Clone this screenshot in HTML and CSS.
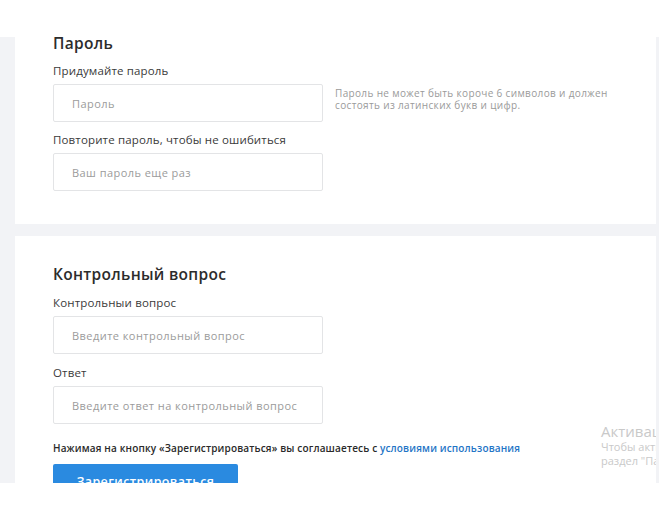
FILE: index.html
```html
<!DOCTYPE html>
<html lang="ru">
<head>
<meta charset="utf-8">
<title>Регистрация</title>
<link rel="stylesheet" href="styles.css">
</head>
<body>
<div class="page">
  <section class="card card-first">
    <h2 class="card-title">Пароль</h2>
    <label class="field-label">Придумайте пароль</label>
    <div class="field-row">
      <div class="input"><span class="placeholder">Пароль</span></div>
      <p class="hint">Пароль не может быть короче 6 символов и должен<br>состоять из латинских букв и цифр.</p>
    </div>
    <label class="field-label">Повторите пароль, чтобы не ошибиться</label>
    <div class="field-row">
      <div class="input"><span class="placeholder">Ваш пароль еще раз</span></div>
    </div>
  </section>
  <section class="card card-second">
    <h2 class="card-title">Контрольный вопрос</h2>
    <label class="field-label">Контрольныи вопрос</label>
    <div class="field-row">
      <div class="input"><span class="placeholder">Введите контрольный вопрос</span></div>
    </div>
    <label class="field-label">Ответ</label>
    <div class="field-row">
      <div class="input"><span class="placeholder">Введите ответ на контрольный вопрос</span></div>
    </div>
    <p class="terms">Нажимая на кнопку «Зарегистрироваться» вы соглашаетесь с <a class="terms-link" href="#">условиями использования</a></p>
    <button class="submit">Зарегистрироваться</button>
    <div class="watermark">
      <div class="wm-title">Активация Windows</div>
      <div class="wm-text">Чтобы активировать Windows, перейдите в</div>
      <div class="wm-text">раздел "Параметры".</div>
    </div>
  </section>
</div>
</body>
</html>
```
FILE: styles.css
```css
* { box-sizing: border-box; }
html, body { margin: 0; padding: 0; background: #fff; }
body {
  font-family: "Open Sans", "Liberation Sans", sans-serif;
  color: #333;
}
.page {
  height: 483px;
  overflow: hidden;
  padding: 0 3px 0 15px;
  background: linear-gradient(to bottom, #fff 0, #fff 37px, #f2f3f6 37px);
  display: flex;
  flex-direction: column;
  gap: 12px;
}
.card {
  background: #fff;
  padding: 0 38px;
  display: flex;
  flex-direction: column;
  flex-shrink: 0;
}
.card-first { padding-top: 33px; padding-bottom: 33px; }
.card-second { padding-top: 28px; position: relative; overflow: hidden; height: 270px; }
.card-title {
  margin: 0;
  font-size: 15.5px;
  line-height: 20px;
  font-weight: 600;
  color: #2c2c2c;
  letter-spacing: 0.3px;
}
.field-label {
  margin-top: 10px;
  font-size: 11.5px;
  line-height: 16px;
  color: #3a3a3a;
  letter-spacing: 0.15px;
}
.card-second .field-label { margin-top: 11px; }
.field-row {
  margin-top: 5px;
  display: flex;
  align-items: flex-start;
}
.input {
  width: 270px;
  height: 38px;
  border: 1px solid #e3e4e6;
  border-radius: 2px;
  background: #fff;
  display: flex;
  align-items: center;
  padding-left: 18px;
}
.placeholder {
  font-size: 11px;
  color: #9b9b9b;
  letter-spacing: 0.45px;
}
.hint {
  margin: 4px 0 0 12px;
  font-size: 10px;
  line-height: 11.5px;
  color: #9a9a9a;
  letter-spacing: 0.35px;
}
.terms {
  margin: 17px 0 0;
  font-size: 10px;
  line-height: 14px;
  font-weight: 600;
  color: #2a2a2a;
  letter-spacing: 0.15px;
  white-space: nowrap;
}
.terms-link { color: #1f75c6; text-decoration: none; }
.submit {
  margin-top: 9px;
  width: 185px;
  height: 34px;
  border: none;
  border-radius: 2px;
  background: #2a8ae0;
  color: #fff;
  font-family: inherit;
  font-size: 12.5px;
  font-weight: 600;
  letter-spacing: 0.4px;
  padding: 0;
  align-self: flex-start;
}
.watermark {
  position: absolute;
  left: 586px;
  top: 186px;
  white-space: nowrap;
  font-family: "Open Sans", "Liberation Sans", sans-serif;
  color: #c9c9c9;
}
.wm-title { font-size: 15px; line-height: 18px; }
.wm-text { font-size: 11px; line-height: 14px; }
```
